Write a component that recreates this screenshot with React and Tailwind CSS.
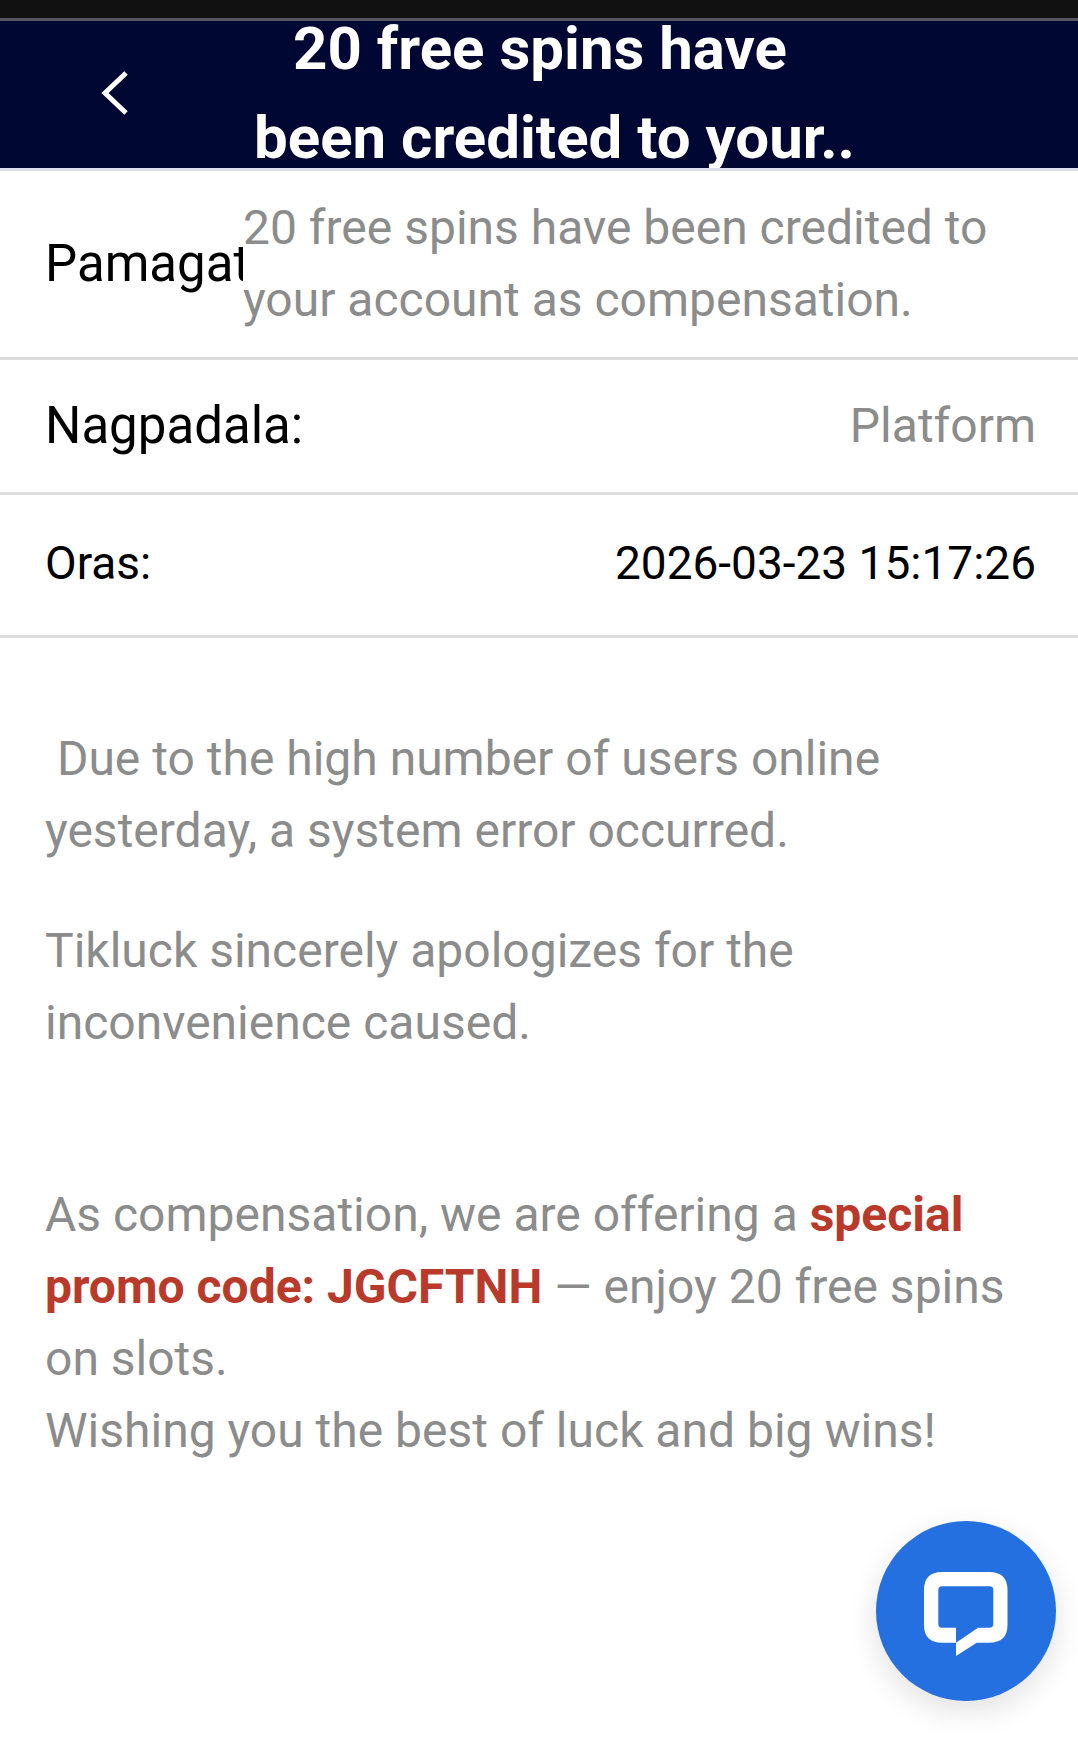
const font = { fontFamily: 'Roboto, sans-serif' }

function ChatIcon() {
  return (
    <svg width="84" height="84" viewBox="0 0 84 84" fill="none">
      <path
        fillRule="evenodd"
        fill="#fff"
        d="M18 0H65Q83.5 0 83.5 18V53Q83.5 70.7 65 70.7H52.7L32 84V70.7H18Q0 70.7 0 53V18Q0 0 18 0ZM18 14.3Q14.3 14.3 14.3 18V52Q14.3 55.7 18 55.7H32V70.7L54 55.7H65.5Q69.3 55.7 69.3 52V18Q69.3 14.3 65.5 14.3Z"
      />
    </svg>
  )
}

function InfoRow({ label, children, className }) {
  return (
    <div className={`flex items-center justify-between border-b-[3px] border-[#dedede] pl-[45px] pr-[42px] ${className}`}>
      <span className="text-black">{label}</span>
      {children}
    </div>
  )
}

export default function App() {
  return (
    <div style={font} className="relative h-[1745px] w-full overflow-hidden bg-white">
      <div className="h-[18px] bg-[#111111]" />
      <div className="h-[3px] bg-[#55555f]" />

      <header className="flex h-[150px] items-center overflow-hidden border-b-[3px] border-[#dfe1ea] bg-[#000733]">
        <div className="flex w-[130px] shrink-0 justify-end pb-[4px]">
          <svg width="30" height="48" viewBox="0 0 30 48" fill="none">
            <polyline points="26,4 5,24 26,44" stroke="#fff" strokeWidth="5" />
          </svg>
        </div>
        <h1 className="flex-1 pr-[128px] pb-[4px] text-center text-[60px] leading-[89px] font-bold text-white">
          20 free spins have
          <br />
          <span className="ml-[29px]">been credited to your..</span>
        </h1>
      </header>

      <div className="flex h-[189px] items-center border-b-[3px] border-[#dedede] pl-[45px] text-[51px]">
        <div className="w-[198px] shrink-0 overflow-hidden whitespace-nowrap text-black">Pamagat:</div>
        <div className="w-[790px] text-[48px] leading-[72px] text-[#8c8c8c]">
          20 free spins have been credited to your account as compensation.
        </div>
      </div>

      <InfoRow label="Nagpadala:" className="h-[135px] text-[51px]">
        <span className="text-[48px] text-[#8c8c8c]">Platform</span>
      </InfoRow>

      <InfoRow label="Oras:" className="h-[143px] pb-[4px] text-[46px]">
        <span className="text-black">2026-03-23 15:17:26</span>
      </InfoRow>

      <div className="px-[45px] pt-[85px] text-[48px] leading-[72px] text-[#8c8c8c]">
        <p>&nbsp;Due to the high number of users online yesterday, a system error occurred.</p>
        <p className="mt-[48px]">Tikluck sincerely apologizes for the inconvenience caused.</p>
        <p className="mt-[48px]">
          <br />
          As compensation, we are offering a{' '}
          <strong className="font-bold text-[#b93a2b]">special promo code: JGCFTNH</strong> — enjoy 20 free spins on
          slots.
          <br />
          Wishing you the best of luck and big wins!
        </p>
      </div>

      <button className="absolute top-[1521px] left-[876px] flex size-[180px] items-center justify-center rounded-full bg-[#2470e0] pt-[6px] shadow-[0_10px_30px_rgba(0,0,0,0.12)]">
        <ChatIcon />
      </button>
    </div>
  )
}
